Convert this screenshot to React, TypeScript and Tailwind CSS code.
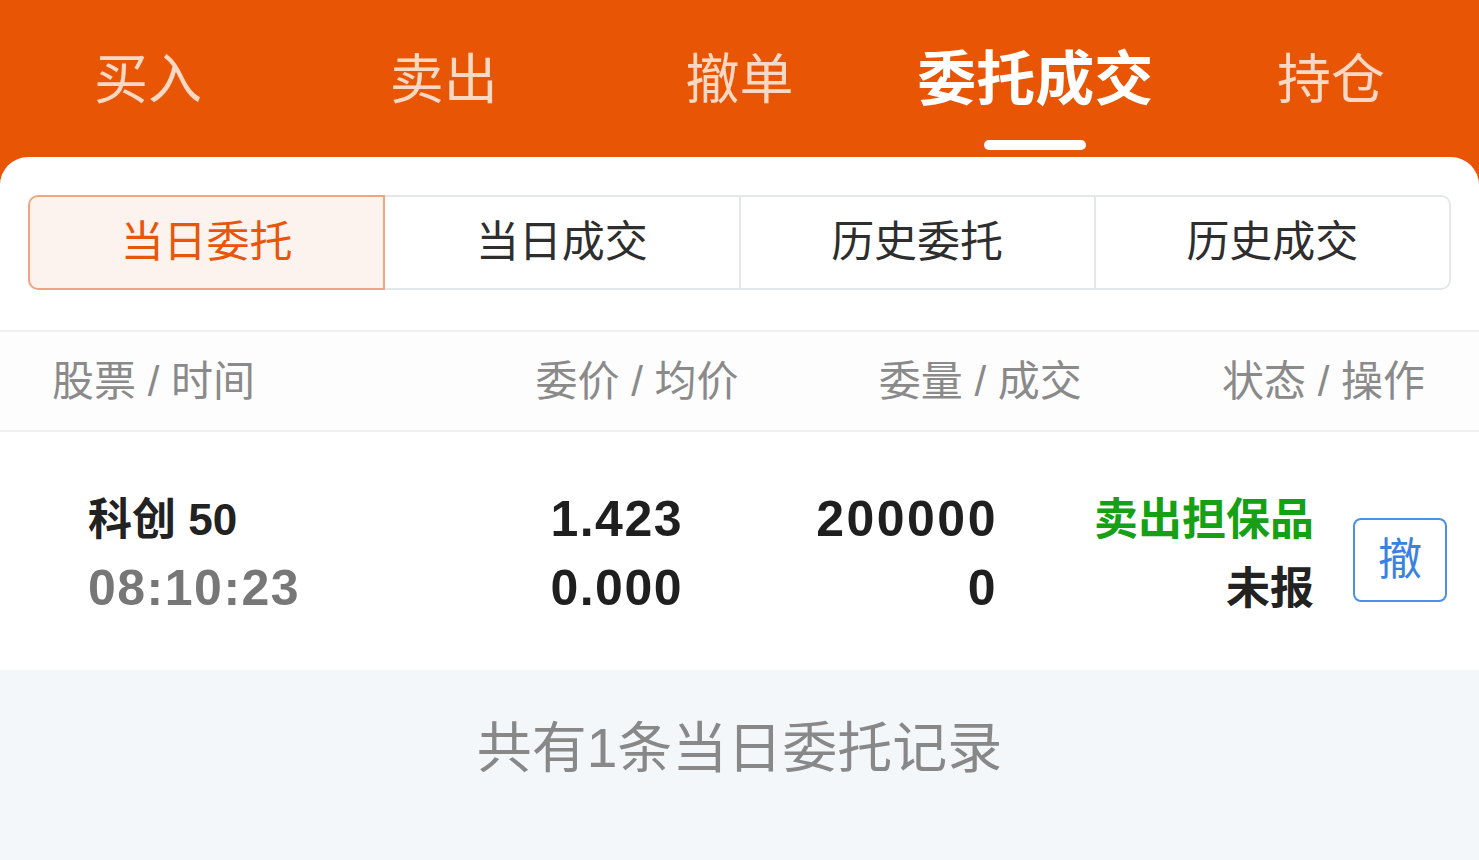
import { useState } from 'react';

const FONT = "font-['Liberation_Sans','Noto_Sans_CJK_SC',sans-serif]";

const topTabs = ['买入', '卖出', '撤单', '委托成交', '持仓'];
const segments = ['当日委托', '当日成交', '历史委托', '历史成交'];

interface OrderRow {
  name: string;
  time: string;
  price: string;
  avgPrice: string;
  qty: string;
  dealQty: string;
  side: string;
  status: string;
}

const orders: OrderRow[] = [
  {
    name: '科创 50',
    time: '08:10:23',
    price: '1.423',
    avgPrice: '0.000',
    qty: '200000',
    dealQty: '0',
    side: '卖出担保品',
    status: '未报',
  },
];

export default function App() {
  const [activeTab, setActiveTab] = useState(3);
  const [activeSeg, setActiveSeg] = useState(0);

  return (
    <div className={`${FONT} w-full h-[860px] flex flex-col bg-[#e85505] overflow-hidden`}>
      {/* 顶部标签 */}
      <div className="h-[157px] flex shrink-0">
        {topTabs.map((tab, i) => {
          const active = i === activeTab;
          return (
            <button
              key={tab}
              onClick={() => setActiveTab(i)}
              className="flex-1 flex flex-col items-center pt-[48px]"
            >
              <span
                className={
                  active
                    ? 'leading-[64px] text-[59px] font-bold text-white'
                    : 'leading-[64px] text-[54px] text-[#fbd8c4]'
                }
              >
                {tab}
              </span>
              {active && <span className="mt-[28px] h-[10px] w-[102px] rounded-full bg-white" />}
            </button>
          );
        })}
      </div>

      {/* 内容卡片 */}
      <div className="flex-1 flex flex-col bg-white rounded-t-[28px] overflow-hidden">
        <div className="px-[28px] pt-[38px]">
          <div className="flex h-[95px]">
            {segments.map((seg, i) => {
              const active = i === activeSeg;
              const first = i === 0;
              const last = i === segments.length - 1;
              return (
                <button
                  key={seg}
                  onClick={() => setActiveSeg(i)}
                  className={`flex-1 flex items-center justify-center text-[43px] ${
                    active
                      ? 'bg-[#fdf3ee] text-[#e8560c] border-2 border-[#f2a47f]'
                      : 'bg-white text-[#2e2e2e] border-y-2 border-r-2 border-[#e3e7ec]'
                  } ${first ? 'rounded-l-[10px]' : ''} ${last ? 'rounded-r-[10px]' : ''}`}
                >
                  {seg}
                </button>
              );
            })}
          </div>
        </div>

        {/* 表头 */}
        <div className="mt-[40px] h-[102px] flex items-center pl-[52px] pr-[54px] border-y-2 border-[#f0f0f0] bg-[#fdfdfd] text-[42px] text-[#8a8a8a]">
          <div className="flex-1">股票 / 时间</div>
          <div className="flex-1 text-right">委价 / 均价</div>
          <div className="flex-1 text-right">委量 / 成交</div>
          <div className="flex-1 text-right">状态 / 操作</div>
        </div>

        {/* 数据行 */}
        {orders.map((o) => (
          <div key={o.time} className="h-[238px] flex items-center pt-[5px] pl-[88px] pr-[32px] shrink-0">
            <div className="flex-1 flex flex-col leading-[69px]">
              <span className="text-[44px] font-bold text-[#222222]">{o.name}</span>
              <span className="text-[50px] font-bold tracking-[1.5px] text-[#777777]">{o.time}</span>
            </div>
            <div className="w-[300px] flex flex-col items-end leading-[69px] text-[50px] font-bold tracking-[1.5px] text-[#1f1f1f]">
              <span>{o.price}</span>
              <span>{o.avgPrice}</span>
            </div>
            <div className="w-[315px] flex flex-col items-end leading-[69px] text-[50px] font-bold tracking-[2.5px] text-[#1f1f1f]">
              <span>{o.qty}</span>
              <span>{o.dealQty}</span>
            </div>
            <div className="w-[316px] flex flex-col items-end leading-[69px] text-[44px] font-bold">
              <span className="text-[#16a016]">{o.side}</span>
              <span className="text-[#222222]">{o.status}</span>
            </div>
            <button className="ml-[39px] mt-[12px] w-[94px] h-[84px] flex items-center justify-center rounded-[8px] border-2 border-[#4a8fe8] text-[44px] text-[#3b82e0]">
              撤
            </button>
          </div>
        ))}

        {/* 底部统计 */}
        <div className="flex-1 bg-[#f4f7f9] pt-[48px] text-center">
          <span className="leading-[60px] text-[55px] text-[#888888]">共有1条当日委托记录</span>
        </div>
      </div>
    </div>
  );
}
